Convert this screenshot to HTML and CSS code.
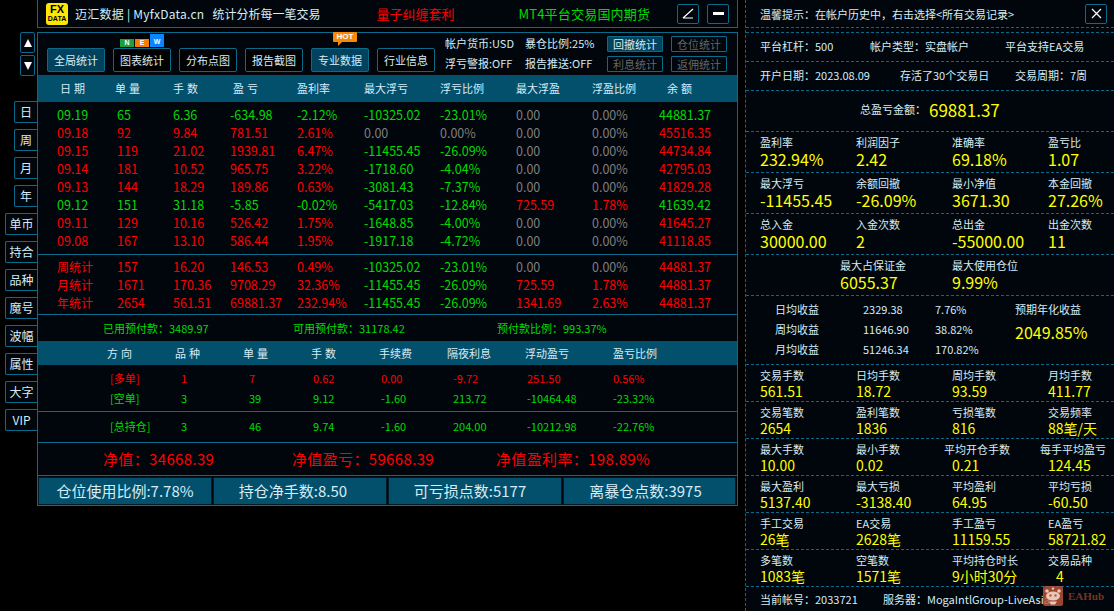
FILE: index.html
```html
<!DOCTYPE html>
<html lang="zh-CN">
<head>
  <meta charset="UTF-8" />
  <title>MyfxData 统计</title>
  <link rel="stylesheet" href="styles.css">
</head>
<body>

  <nav class="rail">
    <button class="arrow"><i class="tri-up"></i></button>
    <button class="arrow arrow-down"><i class="tri-down"></i></button>
    <div class="rail-tabs">
      <button class="tab">日</button>
      <button class="tab">周</button>
      <button class="tab">月</button>
      <button class="tab">年</button>
      <button class="tab tab-wide">单币</button>
      <button class="tab tab-wide">持合</button>
      <button class="tab tab-wide">品种</button>
      <button class="tab tab-wide">魔号</button>
      <button class="tab tab-wide">波幅</button>
      <button class="tab tab-wide">属性</button>
      <button class="tab tab-wide">大字</button>
      <button class="tab tab-wide">VIP</button>
    </div>
  </nav>

  <main class="main">
    <header class="topbar">
      <div class="logo"><b>FX</b><span>DATA</span></div>
      <div class="brand">迈汇数据 | MyfxData.cn</div>
      <div class="slogan">统计分析每一笔交易</div>
      <div class="promo-red">量子纠缠套利</div>
      <div class="promo-green">MT4平台交易国内期货</div>
      <button class="icon-btn icon-pen">
        <svg width="13" height="11" viewBox="0 0 13 11"><path d="M1 10 L11 1 M1 10 H11" stroke="#fff" stroke-width="1.2" fill="none"/></svg>
      </button>
      <button class="icon-btn"><i class="minus"></i></button>
    </header>

    <section class="panel">
      <div class="toolbar">
        <button class="tool tool-on">全局统计</button>
        <button class="tool has-badge">图表统计
          <span class="new-badge"><i class="n">N</i><i class="e">E</i><i class="w">W</i></span>
        </button>
        <button class="tool">分布点图</button>
        <button class="tool">报告截图</button>
        <button class="tool tool-on has-badge">专业数据
          <span class="hot-badge">HOT</span>
        </button>
        <button class="tool">行业信息</button>
        <div class="acct">
          <span>帐户货币:USD</span><span>暴仓比例:25%</span>
          <span>浮亏警报:OFF</span><span>报告推送:OFF</span>
        </div>
        <div class="mini-btns">
          <button class="mini mini-on">回撤统计</button>
          <button class="mini">仓位统计</button>
          <button class="mini">利息统计</button>
          <button class="mini">返佣统计</button>
        </div>
      </div>

      <div class="thead">
        <span class="sp">日期</span><span class="sp">单量</span><span class="sp">手数</span><span class="sp">盈亏</span><span>盈利率</span><span>最大浮亏</span><span>浮亏比例</span><span>最大浮盈</span><span>浮盈比例</span><span class="sp">余额</span>
      </div>

      <div class="tbody">
        <div class="row g"><span>09.19</span><span>65</span><span>6.36</span><span>-634.98</span><span>-2.12%</span><span>-10325.02</span><span>-23.01%</span><span class="n">0.00</span><span class="n">0.00%</span><span>44881.37</span></div>
        <div class="row"><span>09.18</span><span>92</span><span>9.84</span><span>781.51</span><span>2.61%</span><span class="n">0.00</span><span class="n">0.00%</span><span class="n">0.00</span><span class="n">0.00%</span><span>45516.35</span></div>
        <div class="row"><span>09.15</span><span>119</span><span>21.02</span><span>1939.81</span><span>6.47%</span><span class="gc">-11455.45</span><span class="gc">-26.09%</span><span class="n">0.00</span><span class="n">0.00%</span><span>44734.84</span></div>
        <div class="row"><span>09.14</span><span>181</span><span>10.52</span><span>965.75</span><span>3.22%</span><span class="gc">-1718.60</span><span class="gc">-4.04%</span><span class="n">0.00</span><span class="n">0.00%</span><span>42795.03</span></div>
        <div class="row"><span>09.13</span><span>144</span><span>18.29</span><span>189.86</span><span>0.63%</span><span class="gc">-3081.43</span><span class="gc">-7.37%</span><span class="n">0.00</span><span class="n">0.00%</span><span>41829.28</span></div>
        <div class="row g"><span>09.12</span><span>151</span><span>31.18</span><span>-5.85</span><span>-0.02%</span><span>-5417.03</span><span>-12.84%</span><span class="rc">725.59</span><span class="rc">1.78%</span><span>41639.42</span></div>
        <div class="row"><span>09.11</span><span>129</span><span>10.16</span><span>526.42</span><span>1.75%</span><span class="gc">-1648.85</span><span class="gc">-4.00%</span><span class="n">0.00</span><span class="n">0.00%</span><span>41645.27</span></div>
        <div class="row"><span>09.08</span><span>167</span><span>13.10</span><span>586.44</span><span>1.95%</span><span class="gc">-1917.18</span><span class="gc">-4.72%</span><span class="n">0.00</span><span class="n">0.00%</span><span>41118.85</span></div>
      </div>

      <div class="tsum">
        <div class="row"><span>周统计</span><span>157</span><span>16.20</span><span>146.53</span><span>0.49%</span><span class="gc">-10325.02</span><span class="gc">-23.01%</span><span class="n">0.00</span><span class="n">0.00%</span><span>44881.37</span></div>
        <div class="row"><span>月统计</span><span>1671</span><span>170.36</span><span>9708.29</span><span>32.36%</span><span class="gc">-11455.45</span><span class="gc">-26.09%</span><span>725.59</span><span>1.78%</span><span>44881.37</span></div>
        <div class="row"><span>年统计</span><span>2654</span><span>561.51</span><span>69881.37</span><span>232.94%</span><span class="gc">-11455.45</span><span class="gc">-26.09%</span><span>1341.69</span><span>2.63%</span><span>44881.37</span></div>
      </div>

      <div class="prepay">
        <span>已用预付款：3489.97</span><span>可用预付款：31178.42</span><span>预付款比例：993.37%</span>
      </div>

      <div class="phead">
        <span class="sp2">方向</span><span class="sp2">品种</span><span class="sp2">单量</span><span class="sp2">手数</span><span>手续费</span><span>隔夜利息</span><span>浮动盈亏</span><span>盈亏比例</span>
      </div>
      <div class="pbody">
        <div class="prow rc"><span>[多单]</span><span>1</span><span>7</span><span>0.62</span><span>0.00</span><span>-9.72</span><span>251.50</span><span>0.56%</span></div>
        <div class="prow gc"><span>[空单]</span><span>3</span><span>39</span><span>9.12</span><span>-1.60</span><span>213.72</span><span>-10464.48</span><span>-23.32%</span></div>
      </div>
      <div class="ptotal">
        <div class="prow gc"><span>[总持仓]</span><span>3</span><span>46</span><span>9.74</span><span>-1.60</span><span>204.00</span><span>-10212.98</span><span>-22.76%</span></div>
      </div>

      <div class="equity">
        <span>净值：34668.39</span><span>净值盈亏：59668.39</span><span>净值盈利率：198.89%</span>
      </div>

      <div class="boxes">
        <div>仓位使用比例:7.78%</div>
        <div class="box-b">持仓净手数:8.50</div>
        <div class="box-c">可亏损点数:5177</div>
        <div class="box-d">离暴仓点数:3975</div>
      </div>
    </section>
  </main>

  <aside class="side">
    <div class="tip">
      <span>温馨提示：在帐户历史中，右击选择&lt;所有交易记录&gt;</span>
      <button class="close">
        <svg width="11" height="11" viewBox="0 0 11 11"><path d="M1 1 L10 10 M10 1 L1 10" stroke="#fff" stroke-width="1.2"/></svg>
      </button>
    </div>

    <div class="info info-a"><span>平台杠杆：500</span><span>帐户类型：实盘帐户</span><span>平台支持EA交易</span></div>
    <div class="info info-b"><span>开户日期：2023.08.09</span><span>存活了30个交易日</span><span>交易周期：7周</span></div>
    <div class="total"><span>总盈亏金额：</span><b>69881.37</b></div>

    <div class="stat big">
      <div><label>盈利率</label><b>232.94%</b></div>
      <div><label>利润因子</label><b>2.42</b></div>
      <div><label>准确率</label><b>69.18%</b></div>
      <div><label>盈亏比</label><b>1.07</b></div>
    </div>
    <div class="stat big">
      <div><label>最大浮亏</label><b>-11455.45</b></div>
      <div><label>余额回撤</label><b>-26.09%</b></div>
      <div><label>最小净值</label><b>3671.30</b></div>
      <div><label>本金回撤</label><b>27.26%</b></div>
    </div>
    <div class="stat big">
      <div><label>总入金</label><b>30000.00</b></div>
      <div><label>入金次数</label><b>2</b></div>
      <div><label>总出金</label><b>-55000.00</b></div>
      <div><label>出金次数</label><b>11</b></div>
    </div>
    <div class="stat big stat-two">
      <div><label>最大占保证金</label><b>6055.37</b></div>
      <div><label>最大使用仓位</label><b>9.99%</b></div>
    </div>

    <div class="avg">
      <div class="avg-rows">
        <span>日均收益</span><span>2329.38</span><span>7.76%</span>
        <span>周均收益</span><span>11646.90</span><span>38.82%</span>
        <span>月均收益</span><span>51246.34</span><span>170.82%</span>
      </div>
      <div class="avg-year"><span>预期年化收益</span><b>2049.85%</b></div>
    </div>

    <div class="stat">
      <div><label>交易手数</label><b>561.51</b></div>
      <div><label>日均手数</label><b>18.72</b></div>
      <div><label>周均手数</label><b>93.59</b></div>
      <div><label>月均手数</label><b>411.77</b></div>
    </div>
    <div class="stat">
      <div><label>交易笔数</label><b>2654</b></div>
      <div><label>盈利笔数</label><b>1836</b></div>
      <div><label>亏损笔数</label><b>816</b></div>
      <div><label>交易频率</label><b>88笔/天</b></div>
    </div>
    <div class="stat">
      <div><label>最大手数</label><b>10.00</b></div>
      <div><label>最小手数</label><b>0.02</b></div>
      <div class="shift"><label>平均开仓手数</label><b>0.21</b></div>
      <div class="shift"><label>每手平均盈亏</label><b>124.45</b></div>
    </div>
    <div class="stat">
      <div><label>最大盈利</label><b>5137.40</b></div>
      <div><label>最大亏损</label><b>-3138.40</b></div>
      <div><label>平均盈利</label><b>64.95</b></div>
      <div><label>平均亏损</label><b>-60.50</b></div>
    </div>
    <div class="stat">
      <div><label>手工交易</label><b>26笔</b></div>
      <div><label>EA交易</label><b>2628笔</b></div>
      <div><label>手工盈亏</label><b>11159.55</b></div>
      <div><label>EA盈亏</label><b>58721.82</b></div>
    </div>
    <div class="stat">
      <div><label>多笔数</label><b>1083笔</b></div>
      <div><label>空笔数</label><b>1571笔</b></div>
      <div><label>平均持仓时长</label><b>9小时30分</b></div>
      <div class="indent"><label>交易品种</label><b>4</b></div>
    </div>

    <div class="foot"><span>当前帐号：2033721</span><span>服务器：MogaIntlGroup-LiveAsia</span></div>

    <div class="watermark">
      <svg width="20" height="20" viewBox="0 0 20 20">
        <rect width="20" height="20" rx="2" fill="#c2563a" fill-opacity="0.8"/>
        <circle cx="4" cy="5" r="1.8" fill="#e9c8bb"/><circle cx="16" cy="5" r="1.8" fill="#e9c8bb"/>
        <circle cx="10" cy="2.6" r="1.2" fill="#e9c8bb"/>
        <ellipse cx="10" cy="10" rx="7" ry="4.6" fill="#e9c8bb"/>
        <circle cx="7.5" cy="9.5" r="1.2" fill="#c2563a"/><circle cx="12.5" cy="9.5" r="1.2" fill="#c2563a"/>
        <path d="M6 15.5 H14 L12 18.5 H8 Z" fill="#e9c8bb"/>
      </svg>
      <span>EAHub</span>
    </div>
  </aside>

</body>
</html>
```

FILE: styles.css
```css
/* 整体：黑底，左边竖排按钮 + 中间主面板 + 右边统计 */
* {
  box-sizing: border-box;
}

html, body {
  height: 100%;
}

body {
  margin: 0;
  background: #000;
  color: #d6ecf6;
  font-family: "Noto Sans CJK SC", "Noto Sans", sans-serif;
  font-size: 11px;
  display: flex;
  overflow: hidden;
}

button {
  font-family: inherit;
  color: inherit;
  padding: 0;
  background: none;
  cursor: pointer;
}

/* 左边竖排 */
.rail {
  width: 37px;
  padding-top: 32px;
  display: flex;
  flex-direction: column;
  align-items: flex-end;
  flex: none;
}

.arrow {
  width: 15px;
  height: 21px;
  margin-right: 2px;
  border: 1px solid #0a6a8a;
  border-radius: 2px;
  background: #00060c;
  display: flex;
  align-items: center;
  justify-content: center;
}

.arrow-down {
  margin-top: 2px;
}

.tri-up {
  border: 4.5px solid transparent;
  border-top: 0;
  border-bottom: 8px solid #fff;
}

.tri-down {
  border: 4.5px solid transparent;
  border-bottom: 0;
  border-top: 8px solid #fff;
}

.rail-tabs {
  margin-top: 25px;
  display: flex;
  flex-direction: column;
  align-items: flex-end;
  gap: 6px;
}

.tab {
  width: 23px;
  height: 22px;
  font-size: 12px;
  line-height: 20px;
  border: 1px solid #0a6a8a;
  border-right: 0;
  border-radius: 2px 0 0 2px;
  background: #00060c;
}

.tab-wide {
  width: 32px;
}

/* 中间 */
.main {
  width: 701px;
  flex: none;
}

.topbar {
  height: 28px;
  border: 1px solid #0a6a8a;
  border-top: 0;
  background: #00060c;
  display: flex;
  align-items: center;
}

.logo {
  width: 22px;
  height: 22px;
  margin-left: 8px;
  background: #ffe600;
  border-radius: 3px;
  color: #000;
  display: flex;
  flex-direction: column;
  align-items: center;
  font-weight: 700;
  line-height: 1;
  font-family: "Liberation Sans", sans-serif;
}

.logo b {
  font-size: 11px;
  margin-top: 1px;
}

.logo span {
  font-size: 7px;
  margin-top: 0;
}

.brand {
  margin-left: 7px;
  font-size: 12px;
  letter-spacing: 0.25px;
}

.slogan {
  margin-left: 8px;
  font-size: 12px;
}

.promo-red {
  margin-left: 56px;
  font-size: 13px;
  color: #f00;
}

.promo-green {
  margin-left: 64px;
  font-size: 13px;
  letter-spacing: 0.2px;
  color: #00dc00;
}

.icon-btn {
  width: 22px;
  height: 20px;
  margin-left: 8px;
  border: 1px solid #0a6a8a;
  border-radius: 2px;
  display: flex;
  align-items: center;
  justify-content: center;
}

.icon-pen {
  margin-left: auto;
}

.topbar .icon-btn:last-child {
  margin-right: 8px;
}

.minus {
  width: 11px;
  height: 3px;
  background: #fff;
}

.panel {
  margin-top: 4px;
  border: 1px solid #0a6a8a;
  background: #00060c;
}

.toolbar {
  height: 42px;
  display: flex;
  align-items: flex-end;
  position: relative;
  padding: 0 0 3px 9px;
}

.tool {
  width: 58px;
  height: 24px;
  margin-right: 8px;
  font-size: 11px;
  border: 1px solid #0a6a8a;
  border-radius: 2px;
  background: #000;
  flex: none;
}

.tool-on {
  background: #03425c;
}

.has-badge {
  position: relative;
}

.new-badge {
  position: absolute;
  left: 6px;
  top: -15px;
  display: flex;
  align-items: flex-end;
  gap: 1px;
  background: #000;
  font-style: normal;
}

.new-badge i {
  width: 14px;
  height: 8px;
  font: 700 7px/8px "Liberation Sans", sans-serif;
  color: #fff;
  text-align: center;
}

.new-badge .n {
  background: #1f9e3a;
}

.new-badge .e {
  background: #f57c00;
}

.new-badge .w {
  height: 13px;
  line-height: 15px;
  background: #0a84ff;
}

.hot-badge {
  position: absolute;
  left: 21px;
  top: -17px;
  width: 24px;
  height: 10px;
  background: #f58a07;
  color: #fff;
  border-radius: 1px;
  font: 700 8px/10px "Liberation Sans", sans-serif;
}

.hot-badge::after {
  content: "";
  position: absolute;
  left: 5px;
  top: 10px;
  border-top: 4px solid #f58a07;
  border-right: 4px solid transparent;
}

.acct {
  margin-left: 2px;
  width: 162px;
  align-self: flex-start;
  display: grid;
  grid-template-columns: 80px 82px;
  grid-auto-rows: 20px;
  line-height: 20px;
  white-space: nowrap;
}

.mini-btns {
  align-self: flex-start;
  margin-top: 3px;
  display: grid;
  grid-template-columns: 56px 56px;
  column-gap: 8px;
  row-gap: 4px;
}

.mini {
  height: 16px;
  font-size: 11px;
  line-height: 13px;
  border: 1px solid #0a6a8a;
  border-radius: 1px;
  color: #666;
}

.mini-on {
  background: #03425c;
  color: #d6ecf6;
}

/* 上表 */
.thead,
.row {
  display: grid;
  grid-template-columns: 60px 56px 57px 67px 67px 76px 76px 76px 67px 1fr;
  padding-left: 19px;
}

.thead {
  height: 27px;
  line-height: 27px;
  background: #03506c;
  padding-left: 22px;
  grid-template-columns: 55px 58px 60px 64px 67px 76px 76px 76px 75px 1fr;
}

.sp {
  letter-spacing: 3px;
}

.tbody {
  height: 153px;
  padding-top: 4px;
  border-bottom: 1px solid #0a6a8a;
}

.tsum {
  height: 60px;
  padding-top: 3px;
  border-bottom: 1px solid #0a6a8a;
}

.tsum .row span:first-child {
  font-size: 12px;
}

.row {
  height: 18px;
  line-height: 18px;
  font-size: 12.5px;
  color: #f00;
  white-space: nowrap;
}

.row.g {
  color: #00dc00;
}

.n {
  color: #7f7f7f;
}

.gc {
  color: #00dc00;
}

.rc {
  color: #f00;
}

.prepay {
  height: 26px;
  line-height: 26px;
  padding-left: 65px;
  color: #00dc00;
  display: grid;
  grid-template-columns: 190px 204px 1fr;
}

.phead,
.prow {
  display: grid;
  white-space: nowrap;
}

.phead {
  height: 24px;
  line-height: 24px;
  background: #03506c;
  padding-left: 69px;
  grid-template-columns: 68px 68px 68px 68px 68px 78px 88px 1fr;
}

.sp2 {
  letter-spacing: 3px;
}

.prow {
  height: 20px;
  line-height: 20px;
  padding-left: 72px;
  grid-template-columns: 71px 68px 64px 68px 72px 74px 86px 1fr;
  font-size: 11px;
}

.pbody {
  height: 47px;
  padding-top: 3px;
  border-bottom: 1px solid #0a6a8a;
}

.ptotal {
  height: 31px;
  padding-top: 4px;
  border-bottom: 1px solid #0a6a8a;
}

.equity {
  height: 33px;
  line-height: 32px;
  padding-left: 65px;
  font-size: 15px;
  letter-spacing: 0.35px;
  color: #f00;
  display: grid;
  grid-template-columns: 189px 204px 1fr;
  border-bottom: 1px solid #0a6a8a;
}

.boxes {
  display: grid;
  grid-template-columns: 174px 174px 174px 1fr;
  gap: 1px;
  padding: 1px 1px 0 0;
  height: 29px;
}

.boxes div {
  background: #03506c;
  border: 1px solid #001a26;
  font-size: 15px;
  line-height: 26px;
  text-align: center;
  white-space: nowrap;
}

.boxes .box-b {
  padding-right: 14px;
}

.boxes .box-c {
  padding-right: 10px;
}

.boxes .box-d {
  padding-right: 8px;
}

/* 右边 */
.side {
  margin-left: 7px;
  flex: 1;
  min-width: 0;
  height: 611px;
  background: #00060c;
  border-left: 1px dashed #0a6a8a;
  position: relative;
  color: #d6ecf6;
}

.tip {
  height: 28px;
  padding: 0 7px 0 14px;
  border-bottom: 1px dashed #0a6a8a;
  display: flex;
  align-items: center;
  justify-content: space-between;
}

.close {
  width: 22px;
  height: 20px;
  border: 1px solid #0a6a8a;
  border-radius: 2px;
  display: flex;
  align-items: center;
  justify-content: center;
}

.info {
  height: 29px;
  padding: 0 0 2px 14px;
  border-bottom: 1px dashed #0a6a8a;
  display: grid;
  align-items: center;
  white-space: nowrap;
}

.info-a {
  margin-top: 4px;
  border-top: 1px dashed #0a6a8a;
  height: 30px;
  grid-template-columns: 110px 135px 1fr;
}

.info-b {
  grid-template-columns: 140px 115px 1fr;
}

.total {
  height: 41px;
  padding: 0 0 4px 114px;
  border-bottom: 1px dashed #0a6a8a;
  display: flex;
  align-items: center;
  gap: 3px;
}

.total b {
  font-weight: 400;
  font-size: 17px;
  color: #ff0;
}

.stat {
  height: 37px;
  padding-left: 14px;
  border-bottom: 1px dashed #0a6a8a;
  display: grid;
  grid-template-columns: 96px 96px 96px 1fr;
  white-space: nowrap;
}

.stat.big {
  height: 41px;
}

.stat-two {
  padding-left: 94px;
  grid-template-columns: 112px 1fr;
}

.stat label {
  display: block;
  height: 17px;
  line-height: 18px;
  margin-top: 1px;
}

.stat b {
  display: block;
  font-weight: 400;
  font-size: 14px;
  line-height: 16px;
  color: #ff0;
}

.stat.big b {
  font-size: 16px;
  line-height: 18px;
}

.shift label {
  margin-left: -8px;
}

.indent b {
  margin-left: 8px;
}

.avg {
  height: 69px;
  padding: 3px 0 0 29px;
  border-bottom: 1px dashed #0a6a8a;
  display: flex;
}

.avg-rows {
  width: 240px;
  display: grid;
  grid-template-columns: 88px 72px 1fr;
  grid-auto-rows: 20px;
  line-height: 20px;
}

.avg-year {
  display: flex;
  flex-direction: column;
}

.avg-year span {
  line-height: 20px;
}

.avg-year b {
  font-weight: 400;
  font-size: 16px;
  line-height: 26px;
  color: #ff0;
}

.foot {
  height: 25px;
  line-height: 25px;
  padding-left: 14px;
  display: grid;
  grid-template-columns: 123px 1fr;
  white-space: nowrap;
}

/* 右下角水印 */
.watermark {
  position: absolute;
  right: 10px;
  bottom: 5px;
  display: flex;
  align-items: center;
  gap: 5px;
  font: 700 11px "Liberation Serif", serif;
  color: #7a3322;
}
```
